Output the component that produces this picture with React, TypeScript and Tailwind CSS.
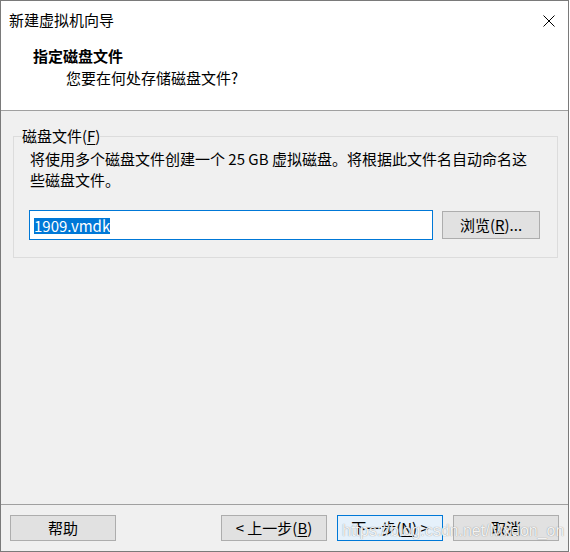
import React from "react";

const font = { fontFamily: '"Noto Sans CJK SC", "Noto Sans", sans-serif' };

function Key({ k }: { k: string }) {
  return <span className="underline underline-offset-2 decoration-1">{k}</span>;
}

function Button({
  children,
  primary,
}: {
  children: React.ReactNode;
  primary?: boolean;
}) {
  return (
    <button
      className={
        primary
          ? "flex h-[26px] w-[106px] items-center justify-center border border-[#0078d7] bg-[#e5f1fb] text-[15px] leading-[20px] text-black"
          : "flex h-[26px] w-[106px] items-center justify-center border border-[#adadad] bg-[#e1e1e1] text-[15px] leading-[20px] text-black"
      }
    >
      {children}
    </button>
  );
}

export default function App() {
  return (
    <div
      className="relative flex h-[552px] w-[569px] flex-col overflow-hidden border border-[#7a7a7a] bg-[#f0f0f0] text-black"
      style={font}
    >
      {/* Header */}
      <div className="h-[110px] border-b border-[#a0a0a0] bg-white">
        <div className="flex h-[38px] items-center justify-between pl-[8px] pr-[13px]">
          <span className="text-[15px] leading-[20px]">新建虚拟机向导</span>
          <svg width="12" height="12" viewBox="0 0 12 12" className="mt-[1px]">
            <path d="M0.5 0.5 L11.5 11.5 M11.5 0.5 L0.5 11.5" stroke="#000" strokeWidth="1" />
          </svg>
        </div>
        <div className="mt-[7px] pl-[32px] text-[15px] font-bold leading-[20px]">
          指定磁盘文件
        </div>
        <div className="mt-[2px] pl-[65px] text-[15px] leading-[20px]">
          您要在何处存储磁盘文件?
        </div>
      </div>

      {/* Body */}
      <div className="flex-1">
        <fieldset className="ml-[12px] mr-[10px] mt-[15px] border border-[#dcdcdc] px-[8px] pb-[17px]">
          <legend className="text-[15px] leading-[20px]">
            磁盘文件(<Key k="F" />)
          </legend>
          <div className="px-[8px]">
            <p className="pt-[2px] text-[15px] leading-[21px]">
              将使用多个磁盘文件创建一个 25 GB 虚拟磁盘。将根据此文件名自动命名这
              <br />
              些磁盘文件。
            </p>
            <div className="-ml-[1px] mt-[20px] flex items-start gap-[9px]">
              <div className="h-[30px] w-[404px] border border-[#0078d7] bg-white pl-[4px] pt-[2px]">
                <span className="inline-block bg-[#0078d7] text-[15px] leading-[16px] text-white">
                  1909.vmdk
                </span>
              </div>
              <button className="mt-[1px] flex h-[28px] w-[98px] items-center justify-center border border-[#adadad] bg-[#e1e1e1] text-[15px] leading-[20px]">
                浏览(<Key k="R" />)...
              </button>
            </div>
          </div>
        </fieldset>
      </div>

      {/* Footer */}
      <div className="flex h-[47px] items-start justify-between border-t border-[#a0a0a0] px-[9px] pt-[10px]">
        <Button>帮助</Button>
        <div className="flex gap-[10px]">
          <Button>
            &lt; 上一步(<Key k="B" />)
          </Button>
          <Button primary>
            下一步(<Key k="N" />) &gt;
          </Button>
          <Button>取消</Button>
        </div>
      </div>

      {/* Watermark */}
      <div
        className="pointer-events-none absolute left-[341px] top-[520px] text-[16px] leading-[20px] text-white/90 [text-shadow:0_0_1px_rgba(0,0,0,0.5)]"
        style={{ fontFamily: '"Liberation Sans", Arial, sans-serif' }}
      >
        https://blog.csdn.net/Mxdon_on
      </div>
    </div>
  );
}
